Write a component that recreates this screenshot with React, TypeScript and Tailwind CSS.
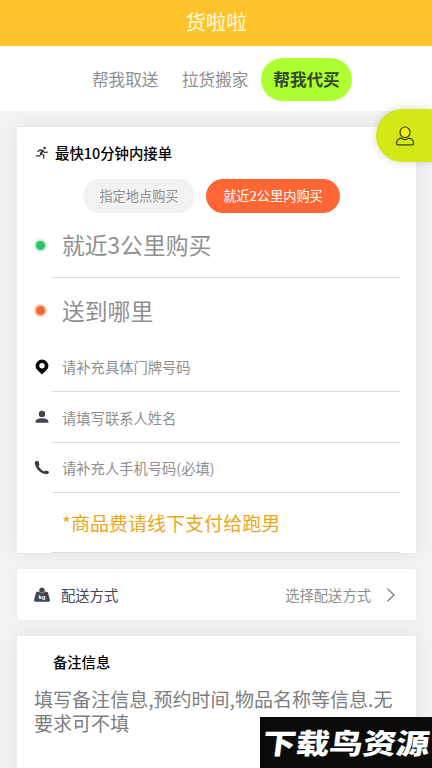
import React from 'react';
import clsx from 'clsx';

const RunnerIcon = () => (
  <svg width="14" height="14" viewBox="0 0 14 14" fill="none" stroke="#3a3843" strokeWidth="1.3" strokeLinecap="round" strokeLinejoin="round">
    <circle cx="9.6" cy="2" r="1.3" fill="#3a3843" stroke="none" />
    <path d="M3 5.4 5.2 3.9 8 4.4 6.2 7.6 8.8 9.2 8.6 12.2" />
    <path d="M8 4.6 9.6 6.600 12.400 6.200" />
    <path d="M5.800 8.400 4.600 9.800 1.200 9.800" />
    <path d="M7.400 4.800 5.900 7.400" strokeWidth="2" />
  </svg>
);

const PinIcon = () => (
  <svg width="14" height="16" viewBox="0 0 14 16">
    <path fillRule="evenodd" fill="#000" d="M7 .6a6.4 6.4 0 0 0-6.4 6.3C.6 10.6 4.6 12.6 7 15.4 9.4 12.6 13.4 10.6 13.4 6.900A6.400 6.400 0 0 0 7 .6Zm0 3.500a2.700 2.700 0 1 1 0 5.400 2.700 2.700 0 0 1 0-5.400Z" />
  </svg>
);

const PersonIcon = () => (
  <svg width="14" height="14" viewBox="0 0 14 14" fill="#454350">
    <circle cx="7" cy="3.9" r="3.2" />
    <path d="M.6 12.800v-1.500C.6 9.300 4 8.200 7 8.200s6.400 1.100 6.400 3.100v1.500Z" />
  </svg>
);

const PhoneIcon = () => (
  <svg width="16" height="15" viewBox="0 0 16 15" fill="#3a3843">
    <path d="M2.2.9C1 1.400.6 2.400.9 3.700c1.200 5.300 5.500 9.600 11 10.400 1.400.2 2.600-.2 3-1.300.3-.8 0-1.400-.8-1.600l-2.300-.6c-.6-.1-1 .1-1.500.9C7.800 10.500 5.800 8.500 4.500 5.800c.9-.5 1.100-.9.900-1.500L4.400 1.600C4 .7 3.200.5 2.200.9Z" />
  </svg>
);

const WeightIcon = () => (
  <svg width="18" height="16" viewBox="0 0 18 16">
    <circle cx="9" cy="3.300" r="2.300" fill="#454350" stroke="#454350" />
    <path d="M4.300 4.800h9.400c.7 0 1.100.3 1.300 1l1.900 7c.3 1.300-.3 2-1.400 2h-13c-1.100 0-1.700-.7-1.400-2l1.900-7c.2-.7.600-1 1.300-1Z" fill="#454350" />
    <path d="M6.500 5.600h5" stroke="#9a98a2" strokeWidth=".8" />
    <text x="9" y="12" textAnchor="middle" fontSize="6" fontWeight="700" fill="#fff" fontFamily="Liberation Sans, sans-serif">kg</text>
  </svg>
);

const UserIcon = () => (
  <svg width="20" height="20" viewBox="0 0 20 20" fill="#f4ee12" stroke="#3c4010" strokeWidth="1.2" strokeLinejoin="round">
    <path fill="none" d="M6.200 12.100c-2.300.3-4.100 1.700-4.600 4-.4 1.700.2 2.700 1.500 2.700h13.800c1.300 0 1.900-1 1.500-2.700-.5-2.300-2.300-3.700-4.600-4-2.200 1.700-5.400 1.700-7.600 0Z" />
    <ellipse cx="10" cy="6.300" rx="5" ry="5.300" />
  </svg>
);

const Dot = ({ ring, core }: { ring: string; core: string }) => (
  <span className={clsx('flex size-[13px] shrink-0 items-center justify-center rounded-full', ring)}>
    <span className={clsx('size-[9px] rounded-full', core)} />
  </span>
);

interface FieldProps {
  icon?: React.ReactNode;
  iconClass?: string;
  className: string;
  line?: boolean;
  children: React.ReactNode;
}

const Field: React.FC<FieldProps> = ({ icon, iconClass = 'pl-4', className, line = true, children }) => (
  <div className="flex">
    <div className={clsx('flex w-[35px] shrink-0 items-center', iconClass)}>
      <div className="flex w-[18px] shrink-0 justify-center">{icon}</div>
    </div>
    <div className={clsx('mr-4 flex flex-1 items-center whitespace-nowrap pl-[10px]', line && 'border-b border-[#dcdcdc]', className)}>
      {children}
    </div>
  </div>
);

export default function App() {
  return (
    <div className="relative flex h-[768px] w-[432px] flex-col overflow-hidden bg-[#f2f2f2] font-['Noto_Sans_CJK_SC',sans-serif]">
      <header className="flex h-[46px] shrink-0 items-center justify-center bg-[#ffc42b] pb-[3px] text-[20.4px] text-[#fffbe0]">
        货啦啦
      </header>

      <nav className="flex h-[65px] shrink-0 items-center bg-white pl-[92px] pt-px text-[16.6px] text-[#8f8f8f]">
        <span className="w-[90px]">帮我取送</span>
        <span className="w-[79px]">拉货搬家</span>
        <span className="flex h-[43px] w-[91px] items-center justify-center rounded-full bg-[#adff2f] font-bold text-[#2f4a2f]">
          帮我代买
        </span>
      </nav>

      <main className="flex flex-col gap-4 pl-[17px] pr-4 pt-4">
        <section className="h-[426px] bg-white shadow-[0_0_16px_rgba(0,0,0,0.07)]">
          <div className="flex h-[52px] items-center gap-[6px] pl-[18px] text-[14.4px] font-medium text-black">
            <RunnerIcon />
            <span>最快10分钟内接单</span>
          </div>
          <div className="flex gap-[11px] pl-[66px] text-[13.2px]">
            <span className="flex h-[34px] w-[112px] items-center justify-center rounded-full bg-[#f2f2f2] text-[#8f8f8f]">指定地点购买</span>
            <span className="flex h-[34px] w-[134px] items-center justify-center rounded-full bg-[#ff6633] text-white">就近2公里内购买</span>
          </div>
          <Field
            icon={<Dot ring="bg-[#c8f2d6]" core="bg-[#2fc565]" />}
            iconClass="pl-[14px]"
            className="h-[65px] pt-px text-[22.8px] text-[#8f8f8f]"
          >
            就近3公里购买
          </Field>
          <Field
            icon={<Dot ring="bg-[#ffc9b3]" core="bg-[#f06a38]" />}
            iconClass="pl-[14px]"
            className="h-[65px] pt-px text-[22.8px] text-[#8f8f8f]"
            line={false}
          >
            送到哪里
          </Field>
          <Field icon={<PinIcon />} iconClass="pl-4 pb-[2px]" className="h-[49px] text-[14.3px] text-[#8f8f8f]">
            请补充具体门牌号码
          </Field>
          <Field icon={<PersonIcon />} iconClass="pl-4 pb-[2px]" className="h-[51px] pt-px text-[14.3px] text-[#8f8f8f]">
            请填写联系人姓名
          </Field>
          <Field icon={<PhoneIcon />} iconClass="pl-4 pb-[2px]" className="h-[50px] text-[14.3px] text-[#8f8f8f]">
            请补充人手机号码(必填)
          </Field>
          <Field className="h-[60px] pt-px text-[19.05px] text-[#e8a820]">*商品费请线下支付给跑男</Field>
        </section>

        <section className="flex h-[51px] items-center bg-white pl-4 pr-[19px] text-[14.3px] shadow-[0_0_8px_rgba(0,0,0,0.03)]">
          <WeightIcon />
          <span className="ml-[10px] text-[#454350]">配送方式</span>
          <span className="ml-auto text-[#8f8f8f]">选择配送方式</span>
          <svg className="ml-[14px]" width="12" height="14" viewBox="0 0 12 14" fill="none" stroke="#777" strokeWidth="1.2">
            <path d="M2.500.8 9 7 2.500 13.200" />
          </svg>
        </section>

        <section className="h-[160px] bg-white shadow-[0_0_16px_rgba(0,0,0,0.07)]">
          <h2 className="flex h-[51px] items-center pl-9 text-[14.3px] font-medium text-black">备注信息</h2>
          <p className="whitespace-nowrap pl-[17px] text-[19.05px] leading-6 text-[#7d7d7d]">
            填写备注信息,预约时间,物品名称等信息.无
            <br />
            要求可不填
          </p>
        </section>
      </main>

      <button className="absolute right-0 top-[109px] flex h-[53px] w-[56px] items-center justify-center rounded-l-full bg-[#d3e817] pl-px shadow-[0_0_8px_rgba(0,0,0,0.15)]">
        <UserIcon />
      </button>

      <div className="absolute bottom-0 right-0 flex h-[51px] w-[172px] items-center justify-center bg-[#0b0b0b] pb-px">
        <span className="-skew-x-6 scale-y-85 whitespace-nowrap text-[33.4px] font-black leading-none text-white">下载鸟资源</span>
      </div>
    </div>
  );
}
